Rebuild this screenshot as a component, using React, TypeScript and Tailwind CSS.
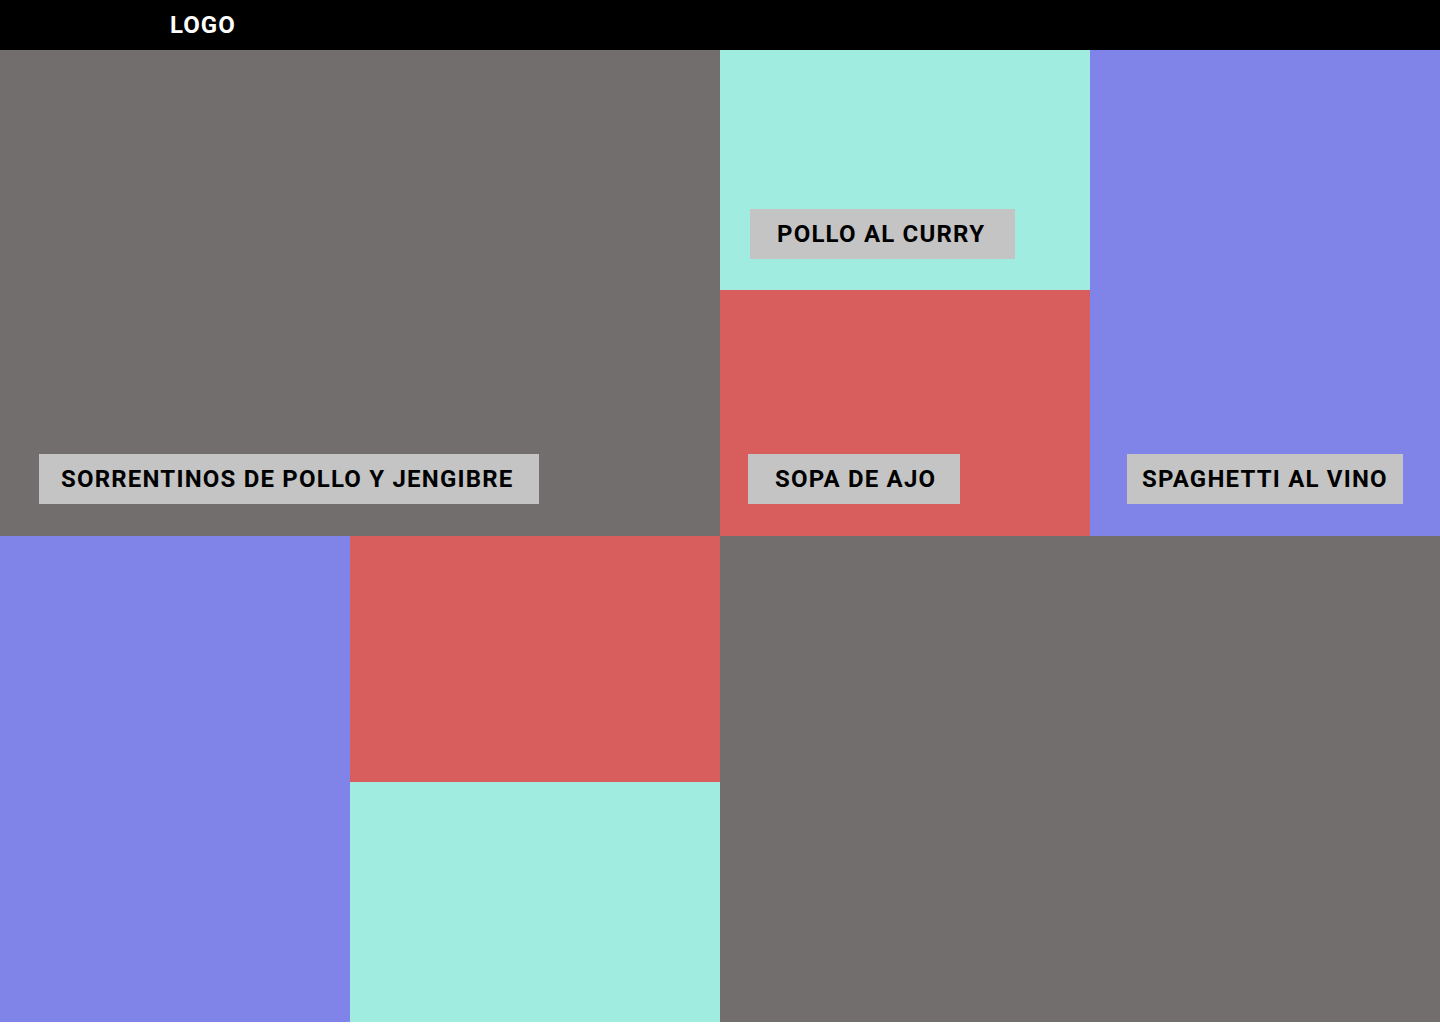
import React from "react";

function Label({ text, w, pl }: { text: string; w: string; pl: string }) {
  return (
    <div
      className={`flex h-[50px] items-center bg-[#c4c4c4] text-[24px] font-bold tracking-[1.2px] text-black ${w} ${pl}`}
      style={{ fontFamily: "Roboto, 'Liberation Sans', sans-serif" }}
    >
      {text}
    </div>
  );
}

export default function App() {
  return (
    <div
      className="h-[1024px] w-[1440px] bg-white"
      style={{ fontFamily: "Roboto, 'Liberation Sans', sans-serif" }}
    >
      <header className="flex h-[50px] items-center bg-black pl-[170px]">
        <span className="text-[24px] font-bold tracking-[1px] text-white">LOGO</span>
      </header>
      <div className="flex h-[486px]">
        <div className="flex w-[720px] items-end bg-[#726e6d] pb-[32px] pl-[39px]">
          <Label text="SORRENTINOS DE POLLO Y JENGIBRE" w="w-[500px]" pl="pl-[22px]" />
        </div>
        <div className="flex w-[370px] flex-col">
          <div className="flex h-[240px] items-end bg-[#a1ece0] pb-[31px] pl-[30px]">
            <Label text="POLLO AL CURRY" w="w-[265px]" pl="pl-[27px]" />
          </div>
          <div className="flex h-[246px] items-end bg-[#d85e5e] pb-[32px] pl-[28px]">
            <Label text="SOPA DE AJO" w="w-[212px]" pl="pl-[27px]" />
          </div>
        </div>
        <div className="flex w-[350px] items-end bg-[#8084e8] pb-[32px] pl-[37px]">
          <Label text="SPAGHETTI AL VINO" w="w-[276px]" pl="pl-[15px]" />
        </div>
      </div>
      <div className="flex h-[486px]">
        <div className="w-[350px] bg-[#8084e8]" />
        <div className="flex w-[370px] flex-col">
          <div className="h-[246px] bg-[#d85e5e]" />
          <div className="h-[240px] bg-[#a1ece0]" />
        </div>
        <div className="w-[720px] bg-[#726e6d]" />
      </div>
    </div>
  );
}
